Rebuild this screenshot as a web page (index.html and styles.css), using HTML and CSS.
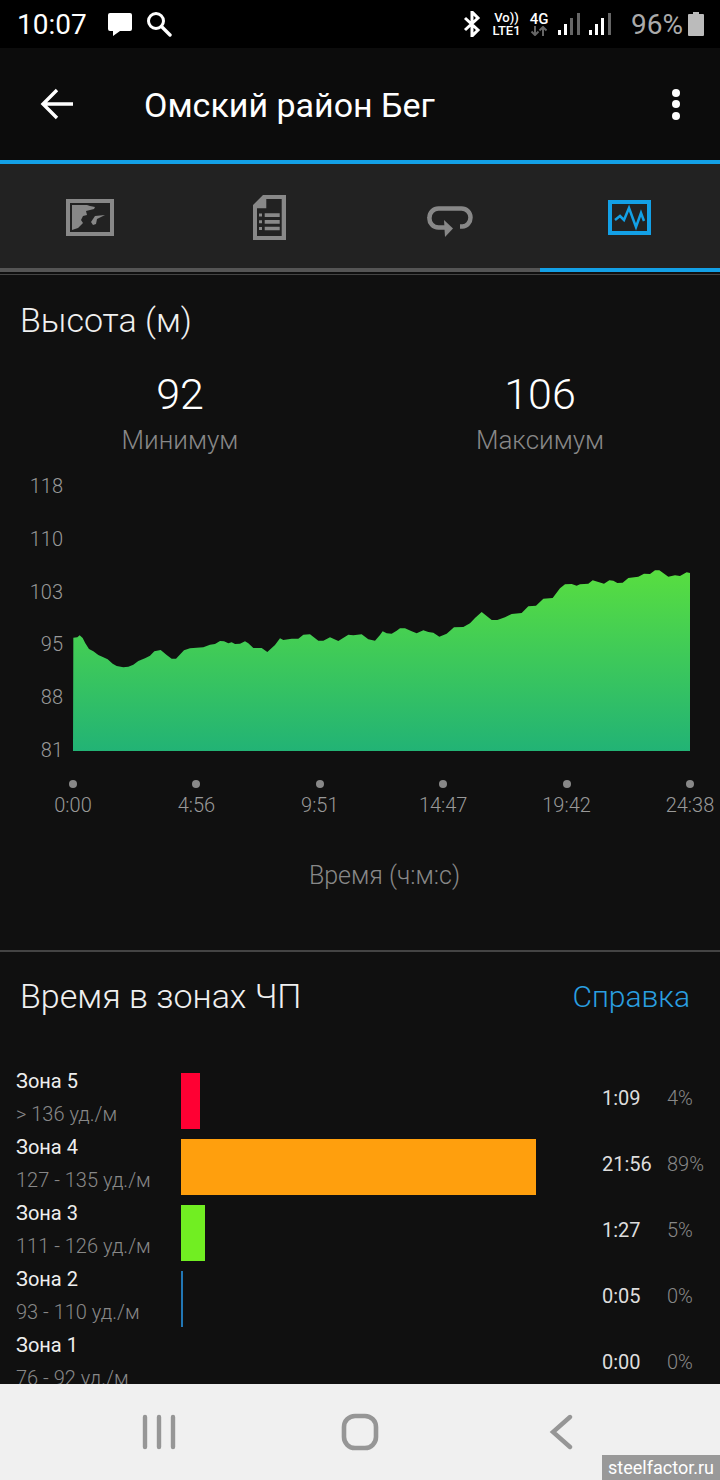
FILE: index.html
```html
<!DOCTYPE html>
<html lang="en">

<head>
  <meta charset="UTF-8" />
  <meta name="viewport" content="width=device-width, initial-scale=1.0" />
  <title>Омский район Бег</title>
  <link rel="stylesheet" href="styles.css">
</head>

<body>
  <div class="phone">
    <div class="status-bar">
      <span class="clock">10:07</span>
      <svg class="st-msg" width="26" height="25" viewBox="0 0 26 25">
        <path d="M3 1h20a2 2 0 0 1 2 2v14a2 2 0 0 1-2 2H13l-7 5v-5H3a2 2 0 0 1-2-2V3a2 2 0 0 1 2-2z" fill="#fff" />
      </svg>
      <svg class="st-search" width="26" height="26" viewBox="0 0 26 26">
        <circle cx="10" cy="10" r="7.5" fill="none" stroke="#fff" stroke-width="3" />
        <path d="M15.5 15.5L24 24" stroke="#fff" stroke-width="3.4" stroke-linecap="round" />
      </svg>
      <div class="st-right">
        <svg width="18" height="26" viewBox="0 0 18 26">
          <path d="M2 7l13 12-6 6V1l6 6L2 19" fill="none" stroke="#fff" stroke-width="3" />
        </svg>
        <div class="st-net st-volte"><span>Vo))</span><span>LTE1</span></div>
        <div class="st-net st-4g">
          <span>4G</span>
          <svg width="18" height="10" viewBox="0 0 18 10">
            <path d="M5 0v9M1.5 5.5L5 9l3.5-3.5M13 10V1M9.5 4.5L13 1l3.5 3.5" fill="none" stroke="#666" stroke-width="2" />
          </svg>
        </div>
        <svg class="st-signal" width="22" height="23" viewBox="0 0 22 23">
          <rect x="0" y="17" width="3" height="5" fill="#fff" />
          <rect x="6" y="11" width="3" height="11" fill="#fff" />
          <rect x="12" y="5" width="3" height="17" fill="#666" />
          <rect x="19" y="0" width="3" height="22" fill="#666" />
        </svg>
        <svg class="st-signal" width="22" height="23" viewBox="0 0 22 23">
          <rect x="0" y="17" width="3" height="5" fill="#fff" />
          <rect x="6" y="11" width="3" height="11" fill="#fff" />
          <rect x="12" y="5" width="3" height="17" fill="#fff" />
          <rect x="19" y="0" width="3" height="22" fill="#666" />
        </svg>
        <span class="st-batt-text">96%</span>
        <svg width="16" height="24" viewBox="0 0 16 24">
          <path d="M5 0h6v2h4a1 1 0 0 1 1 1v20a1 1 0 0 1-1 1H1a1 1 0 0 1-1-1V3a1 1 0 0 1 1-1h4z" fill="#bbb" />
        </svg>
      </div>
    </div>

    <div class="app-bar">
      <svg class="back" width="33" height="32" viewBox="0 0 33 32">
        <path d="M33 16H4M17 2L3 16l14 14" fill="none" stroke="#fff" stroke-width="3.4" />
      </svg>
      <h1>Омский район Бег</h1>
      <div class="more"><i></i><i></i><i></i></div>
    </div>

    <div class="tabs">
      <div class="tab">
        <svg width="48" height="37" viewBox="0 0 48 37">
          <rect x="2" y="2" width="44" height="33" fill="none" stroke="#888" stroke-width="4" />
          <path d="M6 6h15l3 1 5 1-1 2-8 2 1 4-4 1-2 4 2 3-5 5-6 2z" fill="#888" />
          <path d="M39 16l-10 1-4 6 2 3 3-1 1-5z" fill="#888" />
        </svg>
      </div>
      <div class="tab">
        <svg width="34" height="45" viewBox="0 0 34 45">
          <path fill-rule="evenodd" fill="#888" d="M10 0h23v45H0V10zM13.3 4v9.3H4V41h24.7V4z" />
          <path d="M6 18.5h3v3H6zM11.7 18.3h15V22h-15zM6 25.3h3v3H6zM11.7 25h15v3.700h-15zM6 32h3v3H6zM11.7 31.7h15v3.600h-15z" fill="#888" />
        </svg>
      </div>
      <div class="tab">
        <svg width="46" height="42" viewBox="0 -10 46 42">
          <path d="M33 20.5h2.5a8 9 0 0 0 8-9 9 9 0 0 0-9-9H11.500a9 9 0 0 0-9 9 9 9 0 0 0 9 10H19" fill="none" stroke="#888" stroke-width="4.5" />
          <path d="M17 14l9 8.500-8 8.500z" fill="#888" />
        </svg>
      </div>
      <div class="tab">
        <svg width="44" height="35" viewBox="0 0 44 35">
          <rect x="2" y="2" width="39" height="31" fill="none" stroke="#13a0e6" stroke-width="4" />
          <path d="M7 20l5-4 4 4 5-12 7 19 5-14 3 8" fill="none" stroke="#13a0e6" stroke-width="2.500" />
        </svg>
      </div>
    </div>
    <div class="tab-line"><div class="tab-line-active"></div></div>
    <div class="tab-rule"></div>

    <section class="elevation">
      <h2>Высота (м)</h2>
      <div class="stats">
        <div class="stat">
          <div class="stat-val">92</div>
          <div class="stat-label">Минимум</div>
        </div>
        <div class="stat">
          <div class="stat-val">106</div>
          <div class="stat-label">Максимум</div>
        </div>
      </div>

      <div class="chart">
        <div class="y-axis">
          <span>118</span><span>110</span><span>103</span><span>95</span><span>88</span><span>81</span>
        </div>
        <svg class="plot" width="617" height="191" viewBox="99 0 1851 573">
          <defs>
            <linearGradient id="elev" gradientUnits="userSpaceOnUse" x1="0" y1="30" x2="0" y2="573">
              <stop offset="0" stop-color="#58de40" />
              <stop offset="1" stop-color="#22b375" />
            </linearGradient>
          </defs>
          <polygon fill="url(#elev)" points="99,573 100,233 112,232 119,226 128,234 136,250 147,267 160,274 175,285 190,292 203,298 218,311 230,318 250,322 265,320 280,314 295,303 315,295 330,287 343,274 362,270 380,285 395,296 408,296 432,271 450,265 490,262 510,254 525,252 540,243 552,244 565,250 575,247 585,252 600,251 615,244 625,250 640,264 665,264 682,276 705,255 720,235 730,240 755,236 775,236 790,224 810,223 835,242 850,242 870,232 895,243 925,224 940,226 965,223 985,238 1005,242 1020,225 1028,214 1040,220 1055,221 1070,212 1080,205 1095,205 1115,214 1130,220 1150,211 1165,216 1180,218 1198,230 1220,221 1242,202 1270,201 1290,190 1305,174 1325,156 1340,168 1355,180 1372,180 1395,172 1415,162 1445,159 1465,139 1488,137 1510,116 1538,114 1560,85 1575,73 1595,72 1610,77 1620,73 1645,71 1658,61 1675,66 1692,71 1708,61 1720,62 1732,69 1748,68 1765,54 1795,50 1812,41 1830,42 1845,31 1858,31 1885,50 1905,46 1920,48 1940,37 1950,39 1950,573" />
        </svg>
      </div>

      <div class="x-axis">
        <div class="tick"><i></i><span>0:00</span></div>
        <div class="tick"><i></i><span>4:56</span></div>
        <div class="tick"><i></i><span>9:51</span></div>
        <div class="tick"><i></i><span>14:47</span></div>
        <div class="tick"><i></i><span>19:42</span></div>
        <div class="tick"><i></i><span>24:38</span></div>
      </div>
      <div class="x-title">Время (ч:м:с)</div>
    </section>

    <section class="zones">
      <div class="zones-head">
        <h2>Время в зонах ЧП</h2>
        <span class="help">Справка</span>
      </div>
      <div class="zone">
        <div class="zone-name"><b>Зона 5</b><span>&gt; 136 уд./м</span></div>
        <div class="zone-track"><div class="zone-bar" style="width: 19px; background: #ff0033;"></div></div>
        <div class="zone-time">1:09</div>
        <div class="zone-pct">4%</div>
      </div>
      <div class="zone">
        <div class="zone-name"><b>Зона 4</b><span>127 - 135 уд./м</span></div>
        <div class="zone-track"><div class="zone-bar" style="width: 355px; background: #ff9f0d;"></div></div>
        <div class="zone-time">21:56</div>
        <div class="zone-pct">89%</div>
      </div>
      <div class="zone">
        <div class="zone-name"><b>Зона 3</b><span>111 - 126 уд./м</span></div>
        <div class="zone-track"><div class="zone-bar" style="width: 24px; background: #71ee22;"></div></div>
        <div class="zone-time">1:27</div>
        <div class="zone-pct">5%</div>
      </div>
      <div class="zone">
        <div class="zone-name"><b>Зона 2</b><span>93 - 110 уд./м</span></div>
        <div class="zone-track"><div class="zone-bar" style="width: 2px; background: #2277b5;"></div></div>
        <div class="zone-time">0:05</div>
        <div class="zone-pct">0%</div>
      </div>
      <div class="zone">
        <div class="zone-name"><b>Зона 1</b><span>76 - 92 уд./м</span></div>
        <div class="zone-track"></div>
        <div class="zone-time">0:00</div>
        <div class="zone-pct">0%</div>
      </div>
    </section>

    <div class="nav-bar">
      <svg width="34" height="36" viewBox="0 0 34 36">
        <path d="M3 3v30M17 3v30M31 3v30" fill="none" stroke="#969696" stroke-width="4.4" stroke-linecap="round" />
      </svg>
      <svg class="nav-home" width="38" height="38" viewBox="0 0 38 38">
        <rect x="3" y="3" width="32" height="32" rx="11" fill="none" stroke="#969696" stroke-width="4.6" />
      </svg>
      <svg width="24" height="36" viewBox="0 0 24 36">
        <path d="M21 3L4 18l17 15" fill="none" stroke="#969696" stroke-width="4.4" stroke-linecap="round" />
      </svg>
    </div>
    <div class="watermark">steelfactor.ru</div>
  </div>
</body>

</html>
```

FILE: styles.css
```css
* {
  box-sizing: border-box;
}

body {
  margin: 0;
  font-family: Roboto, "Liberation Sans", sans-serif;
  background-color: #101010;
  color: #fff;
}

.phone {
  position: relative;
  width: 720px;
  height: 1480px;
  overflow: hidden;
  display: flex;
  flex-direction: column;
  background-color: #101010;
}

/* status bar */
.status-bar {
  height: 48px;
  flex: none;
  background-color: #000;
  display: flex;
  align-items: center;
  padding: 0 16px 0 17px;
}

.clock {
  font-size: 28px;
  width: 90px;
}

.st-search {
  margin-left: 13px;
}

.st-right {
  margin-left: auto;
  display: flex;
  align-items: center;
}

.st-net {
  display: flex;
  flex-direction: column;
  align-items: center;
  font-size: 13px;
  font-weight: 500;
  line-height: 13px;
}

.st-volte {
  margin-left: 10px;
  width: 31px;
}

.st-4g {
  margin-left: 8px;
  width: 18px;
  font-size: 15px;
}

.st-signal {
  margin-left: 10px;
}

.st-signal + .st-signal {
  margin-left: 9px;
}

.st-batt-text {
  font-size: 28px;
  color: #aaa;
  margin: 0 5px 0 20px;
}

/* app bar */
.app-bar {
  height: 112px;
  flex: none;
  background-color: #0c0c0c;
  display: flex;
  align-items: center;
  padding: 0 40px;
}

.back {
  flex: none;
}

.app-bar h1 {
  margin: 2px 0 0 71px;
  font-size: 34px;
  font-weight: 400;
  flex: 1;
}

.more {
  display: flex;
  flex-direction: column;
  gap: 3.5px;
}

.more i {
  display: block;
  width: 8px;
  height: 8px;
  border-radius: 50%;
  background-color: #fff;
}

/* tabs */
.tabs {
  height: 108px;
  flex: none;
  border-top: 4px solid #13a0e6;
  padding-top: 2px;
  background-color: #222;
  display: grid;
  grid-template-columns: repeat(4, 1fr);
  align-items: center;
  justify-items: center;
}

.tab svg {
  display: block;
}

.tab-line {
  height: 4px;
  flex: none;
  background-color: #555;
  display: flex;
  justify-content: flex-end;
}

.tab-line-active {
  width: 180px;
  background-color: #13a0e6;
}

.tab-rule {
  height: 1px;
  flex: none;
  margin-top: 2px;
  background-color: #444;
}

/* elevation section */
h2 {
  margin: 0;
  font-size: 34px;
  font-weight: 300;
  color: #f0f0f0;
}

.elevation {
  height: 677px;
  flex: none;
  border-bottom: 2px solid #444;
  padding-top: 26px;
}

.elevation h2 {
  padding-left: 20px;
  line-height: 38px;
}

.stats {
  display: grid;
  grid-template-columns: 360px 360px;
  margin-top: 30px;
}

.stat {
  text-align: center;
}

.stat-val {
  font-size: 43px;
  font-weight: 300;
  line-height: 50px;
}

.stat-label {
  font-size: 26px;
  font-weight: 300;
  color: #888;
  line-height: 32px;
  margin-top: 5px;
}

.chart {
  display: flex;
  margin-top: 18px;
  height: 306px;
}

.y-axis {
  width: 73px;
  height: 288px;
  padding: 0 10px 0 0;
  display: flex;
  flex-direction: column;
  justify-content: space-between;
  align-items: flex-end;
  font-size: 20px;
  line-height: 24px;
  font-weight: 300;
  color: #999;
}

.plot {
  display: block;
  margin-top: 86px;
}

.x-axis {
  display: grid;
  grid-template-columns: repeat(6, 123.4px);
  margin: 0 0 0 11.3px;
}

.tick {
  display: flex;
  flex-direction: column;
  align-items: center;
  font-size: 20px;
  font-weight: 300;
  color: #999;
}

.tick i {
  width: 8px;
  height: 8px;
  border-radius: 50%;
  background-color: #888;
}

.tick span {
  line-height: 24px;
  margin-top: 5px;
}

.x-title {
  text-align: center;
  font-size: 25px;
  font-weight: 300;
  color: #888;
  margin-top: 44px;
  padding-left: 49px;
  line-height: 30px;
}

/* zones section */
.zones {
  flex: 1;
  min-height: 0;
  overflow: hidden;
}

.zones-head {
  display: flex;
  justify-content: space-between;
  align-items: center;
  padding: 26px 30px 0 20px;
  height: 62px;
  margin-bottom: 54px;
}

.help {
  font-size: 30px;
  font-weight: 300;
  color: #2a9fe0;
}

.zone {
  display: flex;
  height: 66px;
  align-items: center;
}

.zone-name {
  width: 181px;
  padding: 0 0 6px 16px;
  display: flex;
  flex-direction: column;
  gap: 8px;
  font-size: 20px;
  line-height: 25px;
}

.zone-name b {
  font-weight: 400;
  color: #eee;
}

.zone-name span {
  font-weight: 300;
  color: #888;
}

.zone-track {
  width: 421px;
  height: 56px;
}

.zone-bar {
  height: 56px;
}

.zone-time {
  width: 65px;
  padding-bottom: 6px;
  font-size: 20px;
  color: #ddd;
}

.zone-pct {
  padding-bottom: 6px;
  font-size: 20px;
  font-weight: 300;
  color: #888;
}

/* android nav */
.nav-bar {
  height: 96px;
  flex: none;
  background-color: #f0f0f0;
  display: flex;
  align-items: center;
  padding: 0 147px 0 142px;
  justify-content: space-between;
}

.nav-home {
  margin-right: 5px;
}

.watermark {
  position: absolute;
  right: 0;
  bottom: 0;
  width: 118px;
  height: 25px;
  background-color: #999;
  color: #fff;
  font-size: 18px;
  line-height: 25px;
  text-align: center;
}
```
